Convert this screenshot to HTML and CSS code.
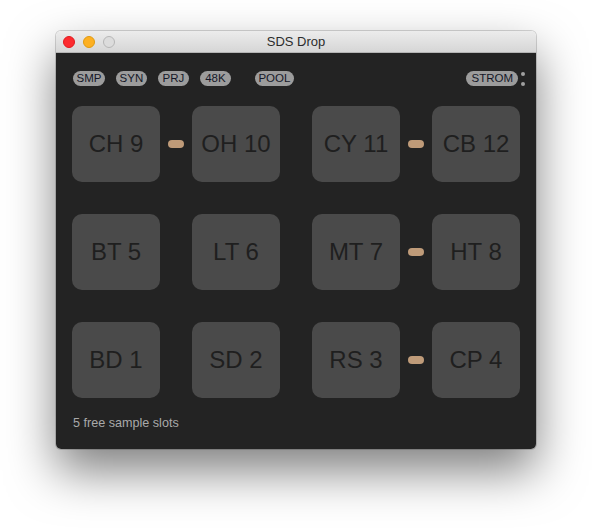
FILE: index.html
```html
<!DOCTYPE html>
<html>
<head>
<meta charset="utf-8">
<link rel="stylesheet" href="styles.css">
</head>
<body>
<div class="window">
  <div class="titlebar">
    <div class="lights">
      <span class="light red"></span>
      <span class="light yellow"></span>
      <span class="light gray"></span>
    </div>
    <div class="title">SDS Drop</div>
  </div>
  <div class="content">
    <div class="toolbar">
      <span class="pill">SMP</span>
      <span class="pill">SYN</span>
      <span class="pill">PRJ</span>
      <span class="pill">48K</span>
      <span class="pill pool">POOL</span>
      <span class="pill strom">STROM</span>
      <span class="colon"><i></i><i></i></span>
    </div>
    <div class="pads">
      <div class="pad">CH 9</div>
      <div class="link"><span></span></div>
      <div class="pad">OH 10</div>
      <div class="link"></div>
      <div class="pad">CY 11</div>
      <div class="link"><span></span></div>
      <div class="pad">CB 12</div>

      <div class="pad">BT 5</div>
      <div class="link"></div>
      <div class="pad">LT 6</div>
      <div class="link"></div>
      <div class="pad">MT 7</div>
      <div class="link"><span></span></div>
      <div class="pad">HT 8</div>

      <div class="pad">BD 1</div>
      <div class="link"></div>
      <div class="pad">SD 2</div>
      <div class="link"></div>
      <div class="pad">RS 3</div>
      <div class="link"><span></span></div>
      <div class="pad">CP 4</div>
    </div>
    <div class="status">5 free sample slots</div>
  </div>
</div>
</body>
</html>
```

FILE: styles.css
```css
html, body {
  margin: 0;
  padding: 0;
  background: #ffffff;
}
body {
  box-sizing: border-box;
  min-height: 530px;
  padding: 31px 0 0 56px;
  font-family: "Liberation Sans", Arial, sans-serif;
}
.window {
  width: 480px;
  height: 418px;
  border-radius: 5px;
  overflow: hidden;
  box-shadow: 0 22px 48px rgba(0,0,0,0.5), 0 0 0 1px rgba(0,0,0,0.16);
  display: flex;
  flex-direction: column;
}
.titlebar {
  height: 22px;
  box-sizing: border-box;
  background: linear-gradient(#ececec, #d6d6d6);
  border-bottom: 1px solid #b4b4b4;
  display: flex;
  align-items: center;
  position: relative;
}
.lights {
  display: flex;
  gap: 8px;
  padding-left: 7px;
}
.light {
  width: 12px;
  height: 12px;
  border-radius: 50%;
  box-sizing: border-box;
}
.red { background: #fc2b2f; border: 1px solid #e01a1e; }
.yellow { background: #fdb022; border: 1px solid #e09a10; }
.gray { background: #dcdcdc; border: 1px solid #b6b6b6; }
.title {
  position: absolute;
  left: 0;
  right: 0;
  text-align: center;
  font-size: 13px;
  color: #2c2c2c;
  pointer-events: none;
}
.content {
  flex: 1;
  background: #232323;
  padding: 18px 11px 0 16px;
  display: flex;
  flex-direction: column;
}
.toolbar {
  display: flex;
  align-items: center;
  height: 15px;
  padding-left: 1px;
  gap: 11px;
}
.pill {
  box-sizing: border-box;
  min-width: 31px;
  height: 15px;
  line-height: 15px;
  padding: 0 3.5px;
  border-radius: 8px;
  background: #9c9c9c;
  color: #151828;
  font-size: 11.5px;
  text-align: center;
}
.pool { margin-left: 13px; }
.strom {
  margin-left: auto;
  padding: 0 5px;
}
.colon {
  display: flex;
  flex-direction: column;
  gap: 6px;
  margin-left: -8px;
}
.colon i {
  width: 4px;
  height: 4px;
  border-radius: 50%;
  background: #a0a0a0;
}
.pads {
  margin-top: 20px;
  display: grid;
  grid-template-columns: 88px 32px 88px 32px 88px 32px 88px;
  grid-auto-rows: 76px;
  row-gap: 32px;
}
.pad {
  background: #4a4a4a;
  border-radius: 10px;
  display: flex;
  align-items: center;
  justify-content: center;
  font-size: 24px;
  color: #1f1f1f;
}
.link {
  display: flex;
  align-items: center;
  justify-content: center;
}
.link span {
  width: 16px;
  height: 8px;
  border-radius: 4px;
  background: #bf9b79;
}
.status {
  margin-top: 18px;
  padding-left: 1px;
  font-size: 12.6px;
  line-height: 14px;
  color: #a9a9a9;
}
```
